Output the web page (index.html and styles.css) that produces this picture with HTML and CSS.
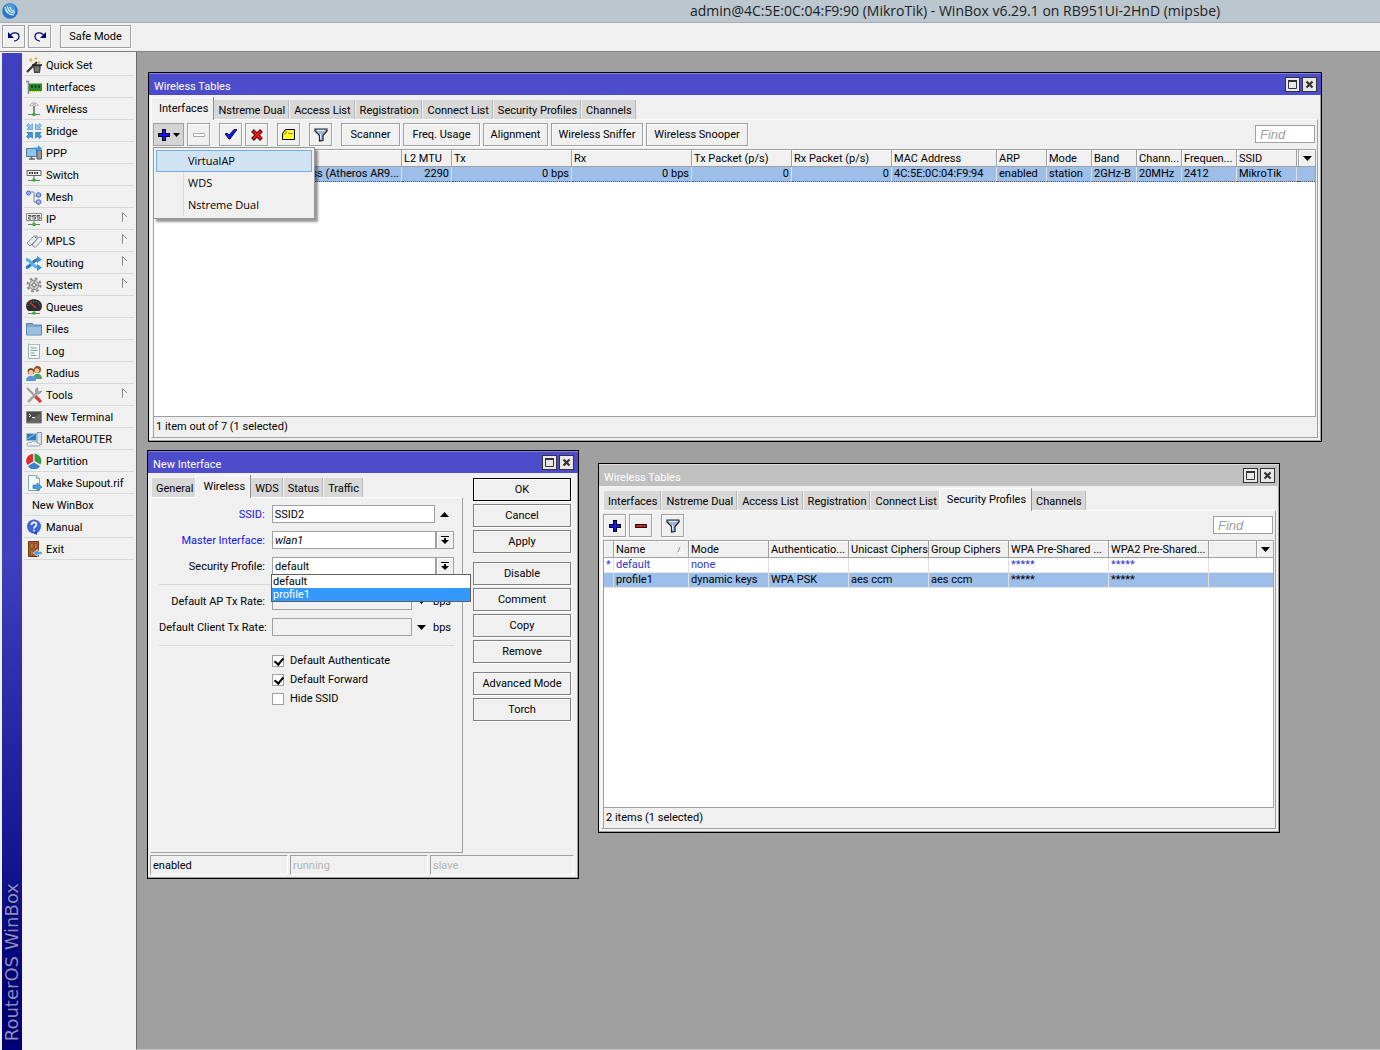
FILE: index.html
```html
<!DOCTYPE html>
<html lang="en">
<head>
<meta charset="utf-8">
<title>WinBox</title>
<link rel="stylesheet" href="styles.css">
</head>
<body>
<svg class="sprite" aria-hidden="true">
  <symbol id="plus" viewBox="0 0 12 12"><path d="M4 0h4v4h4v4H8v4H4V8H0V4h4z" fill="#000"/><path d="M5 1h2v4h4v2H7v4H5V7H1V5h4z" fill="#1414ff"/></symbol>
  <symbol id="filter" viewBox="0 0 14 14"><path d="M1 1h12v2L9 7.500v5L5.500 13V7.500L1 3z" fill="#9fb4dc" stroke="#222" stroke-width="1.200"/><path d="M3 2.500h8M6.500 6v5" stroke="#e4ecfa"/></symbol>
  <symbol id="max" viewBox="0 0 9 9"><path d="M.5.500h8v8h-8z" fill="none" stroke="#333"/><path d="M0 1h9" stroke="#333" stroke-width="2"/></symbol>
  <symbol id="close" viewBox="0 0 9 9"><path d="M1.500 1.500l6 6M7.500 1.500l-6 6" stroke="#333" stroke-width="2.200"/></symbol>
  <symbol id="down" viewBox="0 0 9 5"><path d="M0 0h9L4.500 5z"/></symbol>
  <symbol id="up" viewBox="0 0 9 5"><path d="M0 5h9L4.500 0z"/></symbol>
  <symbol id="pick" viewBox="0 0 8 8"><path d="M0 0h8v1H0zM3 2h2v2h3L4 8 0 4h3z"/></symbol>
  <symbol id="sub" viewBox="0 0 6 10"><path d="M.5 10V.500L5 5" fill="none" stroke="#888"/><path d="M5.500 5L1 9.500" stroke="#fff"/></symbol>
</svg>

<header class="titlebar">
  <svg class="logo" viewBox="0 0 16 16"><circle cx="8" cy="8" r="7.800" fill="#2a78c4"/><circle cx="8" cy="6" r="5.500" fill="#4b9ade"/><path d="M3 4c1 5 4 8 9 8M5.500 3.500c.5 4 3 6.500 7.500 6.500M8 4c.5 2.500 2 4 5 4.500" fill="none" stroke="#fff" stroke-width="1.100"/></svg>
  <h1>admin@4C:5E:0C:04:F9:90 (MikroTik) - WinBox v6.29.1 on RB951Ui-2HnD (mipsbe)</h1>
</header>

<div class="appbar">
  <button class="btn icon" aria-label="Undo"><svg width="12" height="11" viewBox="0 0 12 11"><path d="M2.500 4C5 .5 11 1.500 11 5.500c0 3-3 4.500-5 4.500" fill="none" stroke="#00007a" stroke-width="1.200"/><path d="M0 1v6h6z" fill="#00007a"/></svg></button>
  <button class="btn icon" aria-label="Redo"><svg width="12" height="11" viewBox="0 0 12 11"><path d="M9.500 4C7 .5 1 1.500 1 5.500c0 3 3 4.500 5 4.500" fill="none" stroke="#00007a" stroke-width="1.200"/><path d="M12 1v6H6z" fill="#00007a"/></svg></button>
  <button class="btn safe">Safe Mode</button>
</div>

<div class="main">
  <div class="strip"><span>RouterOS WinBox</span></div>
  <nav class="side">
    <button><svg viewBox="0 0 16 16"><path d="M1 15L11 5" stroke="#333" stroke-width="2.200"/><path d="M7 8h8l-1 8H8z" fill="#444"/><path d="M6 8h10" stroke="#222" stroke-width="1.500"/><path d="M10 9.500v5M12 9.500v5" stroke="#aaa"/><path d="M5 1v4M3 3h4M10 0v3M8.500 1.500h3M13 4v3M11.500 5.500h3" stroke="#d9b02c"/></svg>Quick Set</button>
    <button><svg viewBox="0 0 16 16"><path d="M0 2.500h2.500V15" fill="none" stroke="#888" stroke-width="1.500"/><path d="M3 4h13v8H3z" fill="#2f8a2f"/><path d="M5 6h2v3H5zM8.500 6h2v3h-2zM12 6h2v3h-2z" fill="#165016"/><path d="M4 12.500h11" stroke="#cdbb3a" stroke-dasharray="1 1"/><path d="M3 4.500h13" stroke="#7cc57c"/></svg>Interfaces</button>
    <button><svg viewBox="0 0 16 16"><path d="M4 5c0-4 8-4 8 0M5.800 5.500c0-2.300 4.400-2.300 4.400 0" fill="none" stroke="#999"/><path d="M8 5v8" stroke="#666" stroke-width="1.500"/><path d="M2 13.500h12" stroke="#777"/><circle cx="8" cy="13.500" r="1.800" fill="#2cb52c"/></svg>Wireless</button>
    <button><svg viewBox="0 0 16 16"><g fill="#8cc4f0" stroke="#4a92cc" stroke-width=".6"><path id="arr" d="M.5 2.500l2-2L4.500 2.500 6.500.800v5.700H.800L2.500 4.500z"/><path d="M15.500 2.500l-2-2-2 2L9.500.800v5.700h5.700l-1.700-2z"/></g><g fill="#3c98d8" stroke="#1c68a4" stroke-width=".6"><path d="M.5 13.500l2 2 2-2 2 1.700V9.500H.800l1.700 2z"/><path d="M15.500 13.500l-2 2-2-2-2 1.700V9.500h5.700l-1.700 2z"/></g></svg>Bridge</button>
    <button><svg viewBox="0 0 16 16"><path d="M11 5h4.500v9H11z" fill="#999" stroke="#555"/><path d="M.5 3.500h10v8H.500z" fill="#8ec5ee" stroke="#58748c"/><path d="M3 14h6M5.500 12v2" stroke="#666" stroke-width="1.500"/><path d="M7 4.500h5V7l4-3.500L12 0v2.500H7z" fill="#3d9ae0"/></svg>PPP</button>
    <button><svg viewBox="0 0 16 16"><path d="M1 3.500h14v5H1z" fill="#eee" stroke="#666"/><path d="M3 6h10" stroke="#333" stroke-width="2" stroke-dasharray="1.500 1"/><path d="M8 9v4M2 13.500h12" stroke="#777"/><circle cx="8" cy="13" r="1.800" fill="#2cb52c"/></svg>Switch</button>
    <button><svg viewBox="0 0 16 16"><path d="M4 3h4v10h3M8 7h4" fill="none" stroke="#888"/><g fill="#9cb8f4" stroke="#4466c8"><circle cx="2.500" cy="4" r="2"/><circle cx="12.500" cy="6" r="2.300"/><circle cx="12.500" cy="13" r="2.300"/></g></svg>Mesh</button>
    <button><svg viewBox="0 0 16 16"><path d="M.5 2.500h15v7H.500z" fill="#f4f4f4" stroke="#888"/><path d="M2 4.500h3v1.500H2.500V8H5M6.500 4.500H10M6.500 4.500V6H9.500v2h-3M14 4.500h-3V6h3v2h-3" fill="none" stroke="#555"/><path d="M8 10v4M2 13.500h12" stroke="#777"/><circle cx="8" cy="13.500" r="1.800" fill="#2cb52c"/></svg>IP<svg class="more"><use href="#sub"/></svg></button>
    <button><svg viewBox="0 0 16 16"><path d="M1 10L8 3l3 0 0 3-7 7zM6 12l7-8 2.500.500V8L9 14.500z" fill="#e9eef0" stroke="#7e9096"/><circle cx="9.500" cy="4.500" r=".7" fill="#667"/></svg>MPLS<svg class="more"><use href="#sub"/></svg></button>
    <button><svg viewBox="0 0 16 16"><path d="M0 12.500c5 0 6-8 13-8" fill="none" stroke="#2c78bc" stroke-width="3"/><path d="M0 4.500c5 0 6 8 13 8" fill="none" stroke="#5aaeea" stroke-width="3"/><path d="M11 1l5 3.500L11 8zM11 9l5 3.500-5 3.500z" fill="#3c94d8"/></svg>Routing<svg class="more"><use href="#sub"/></svg></button>
    <button><svg viewBox="0 0 16 16"><circle cx="8" cy="8" r="6.500" fill="none" stroke="#8a8a8a" stroke-width="2" stroke-dasharray="2.600 2.500"/><circle cx="8" cy="8" r="4.800" fill="#d0d0d0" stroke="#8a8a8a"/><circle cx="8" cy="8" r="1.800" fill="#f4f4f4" stroke="#777"/><path d="M8 3.500v2.500M8 10v2.500M3.500 8H6M10 8h2.500" stroke="#888"/></svg>System<svg class="more"><use href="#sub"/></svg></button>
    <button><svg viewBox="0 0 16 16"><path d="M0 7c0-9 16-9 16 0 0 3-2 5-3 5H3C2 12 0 10 0 7z" fill="#2e2e2e"/><path d="M2 7c0-6 12-6 12 0" fill="none" stroke="#888" stroke-dasharray="1 1.500"/><path d="M4 3.500L10 9" stroke="#e03030" stroke-width="1.300"/><path d="M2 14.500h12" stroke="#777"/><circle cx="8" cy="14" r="1.800" fill="#2cb52c"/></svg>Queues</button>
    <button><svg viewBox="0 0 16 16"><path d="M.5 2.500h6l1 1.500h8v10H.500z" fill="#7da7d0" stroke="#5b86b0"/><path d="M1 6h14v7.500H1z" fill="#9cc0e2"/></svg>Files</button>
    <button><svg viewBox="0 0 16 16"><path d="M2.500 1v14.500h11V1l-1 1-1-1-1 1-1-1-1 1-1-1-1 1-1-1-1 1-1-1z" fill="#eff6f4" stroke="#9ab0aa"/><path d="M4.500 5h6M4.500 7.500h7M4.500 10h4M4.500 12.500h6" stroke="#7fa39a"/></svg>Log</button>
    <button><svg viewBox="0 0 16 16"><path d="M7 14c0-7 9-7 9 0z" fill="#4fa070"/><circle cx="11.500" cy="4.500" r="3.500" fill="#a04a20"/><circle cx="11" cy="5.500" r="2.300" fill="#f0c49a"/><path d="M0 16c0-7 10-7 10 0z" fill="#5b94d8"/><circle cx="5" cy="6.500" r="3.300" fill="#70401c"/><circle cx="5" cy="7.500" r="2.500" fill="#f4cca4"/></svg>Radius</button>
    <button><svg viewBox="0 0 16 16"><path d="M1 1l8 8" stroke="#999" stroke-width="1.800"/><path d="M9 9l6 6" stroke="#d83a30" stroke-width="3.200"/><path d="M2 15L11 6" stroke="#a8a8a8" stroke-width="2.600"/><path d="M12 1c-2 0-3 2-2.500 4S14 8 15.500 4L13 5l-1.500-1.500z" fill="#a8a8a8" stroke="#777" stroke-width=".6"/></svg>Tools<svg class="more"><use href="#sub"/></svg></button>
    <button><svg viewBox="0 0 16 16"><path d="M.5 2.500h15v11.500H.500z" fill="#4a4a4a" stroke="#8a8a8a"/><path d="M1.500 13L14.500 4v9z" fill="#666"/><path d="M3 5l2 1.500L3 8M6 8.500h3" fill="none" stroke="#eee"/></svg>New Terminal</button>
    <button><svg viewBox="0 0 16 16"><path d="M11 1.500h4.500v12H11z" fill="#dde3e8" stroke="#8a98a4"/><path d="M.5 2.500h10v7H.500z" fill="#2d7fc4" stroke="#a9bccb"/><path d="M1 8l8-5" stroke="#8cc3ee"/><path d="M1 14c0-3 3-3 4-2 1-3 6-2 6 0 3-.5 4 3 2 3H3c-1 0-2 0-2-1z" fill="#e8f0f6" stroke="#90a4b4"/></svg>MetaROUTER</button>
    <button><svg viewBox="0 0 16 16"><path d="M7 8.500V1a7 7 0 0 0-5.500 11z" fill="#dc2c2c"/><path d="M8.500 8V.500a7.500 7.500 0 0 1 6 11z" fill="#2f9a4a"/><path d="M8 9.500l6 3.500a7 7 0 0 1-12 0z" fill="#3a7fd0"/></svg>Partition</button>
    <button><svg viewBox="0 0 16 16"><path d="M2.500.500h8l3 3v12h-11z" fill="#f5fafa" stroke="#8aa4a8"/><path d="M10.500.500v3h3" fill="none" stroke="#8aa4a8"/><path d="M7 10h4V8l5 4-5 4v-2.500H7z" fill="#45a0e0" stroke="#1f6cac" stroke-width=".6"/></svg>Make Supout.rif</button>
    <button class="bare">New WinBox</button>
    <button><svg viewBox="0 0 16 16"><circle cx="8" cy="7.500" r="7" fill="#3c66d8"/><path d="M5 13l6 3v-4z" fill="#2a4cb0"/><path d="M5.500 6c0-3.500 5-3.500 5-.5 0 2-2.500 1.700-2.500 4M8 10.800v1.700" fill="none" stroke="#fff" stroke-width="1.700"/></svg>Manual</button>
    <button><svg viewBox="0 0 16 16"><path d="M2.500.500h10v15h-10z" fill="#a8602c" stroke="#6e3a14"/><path d="M4.500 2.500h2.500v5H4.500zM8.500 2.500H11v5H8.500zM4.500 9h2.500v5H4.500z" fill="#c47c40" stroke="#80481c" stroke-width=".7"/><path d="M16 10.500h-4V8.500L7 12l5 3.500v-2h4z" fill="#4aa6e4" stroke="#e8f4fc" stroke-width=".6"/></svg>Exit</button>
  </nav>

  <main class="desktop">
    <section class="win win-tables">
      <header class="cap"><h2>Wireless Tables</h2><button aria-label="Maximize"><svg><use href="#max"/></svg></button><button aria-label="Close"><svg><use href="#close"/></svg></button></header>
      <div class="tabs" role="tablist">
        <button role="tab" aria-selected="true">Interfaces</button><button role="tab">Nstreme Dual</button><button role="tab">Access List</button><button role="tab">Registration</button><button role="tab">Connect List</button><button role="tab">Security Profiles</button><button role="tab">Channels</button>
      </div>
      <div class="panel">
        <div class="tools">
          <div class="split">
            <button class="btn pressed" aria-label="Add"><svg width="12" height="12"><use href="#plus"/></svg><svg width="7" height="4"><use href="#down"/></svg></button>
            <div class="menu" role="menu">
              <button role="menuitem" class="hot">VirtualAP</button>
              <button role="menuitem">WDS</button>
              <button role="menuitem">Nstreme Dual</button>
            </div>
          </div>
          <button class="btn icon" aria-label="Remove" disabled><svg width="12" height="4" viewBox="0 0 12 4"><path d="M.5.500h11v3H.500z" fill="#fff" stroke="#aaa"/></svg></button>
          <button class="btn icon gap" aria-label="Enable"><svg width="12" height="11" viewBox="0 0 12 11"><path d="M0 5l2-1 2 2 5-5.500h3L5 10H4z" fill="#1414ff" stroke="#000" stroke-width=".8"/></svg></button>
          <button class="btn icon" aria-label="Disable"><svg width="12" height="12" viewBox="0 0 12 12"><path d="M1.500 1.500l9 9M10.500 1.500l-9 9" stroke="#300" stroke-width="4"/><path d="M2 2l8 8M10 2l-8 8" stroke="#f01414" stroke-width="2.400"/></svg></button>
          <button class="btn icon gap" aria-label="Comment"><svg width="13" height="11" viewBox="0 0 13 11"><path d="M3.500.500h9v10H.500v-6z" fill="#ffff28" stroke="#000"/><path d="M4 1v4H1M6 4.500h5" fill="none" stroke="#a09020"/></svg></button>
          <button class="btn icon gap" aria-label="Filter"><svg width="14" height="14"><use href="#filter"/></svg></button>
          <button class="btn gap w-scan">Scanner</button>
          <button class="btn w-freq">Freq. Usage</button>
          <button class="btn w-align">Alignment</button>
          <button class="btn w-sniff">Wireless Sniffer</button>
          <button class="btn w-snoop">Wireless Snooper</button>
          <input class="find" type="text" placeholder="Find" aria-label="Find">
        </div>
        <div class="list">
          <table>
            <colgroup><col class="c125"><col class="c123"><col class="c50"><col class="c120"><col class="c120"><col class="c100"><col class="c100"><col class="c105"><col class="c50"><col class="c45"><col class="c45"><col class="c45"><col class="c55"><col class="c60"><col><col class="c16"></colgroup>
            <thead><tr><th></th><th></th><th>L2 MTU</th><th>Tx</th><th>Rx</th><th>Tx Packet (p/s)</th><th>Rx Packet (p/s)</th><th>MAC Address</th><th>ARP</th><th>Mode</th><th>Band</th><th>Chann...</th><th>Frequen...</th><th>SSID</th><th></th><th class="drop"><svg width="9" height="5"><use href="#down"/></svg></th></tr></thead>
            <tbody><tr class="sel focus"><td></td><td class="num">Wireless (Atheros AR9...</td><td class="num">2290</td><td class="num">0 bps</td><td class="num">0 bps</td><td class="num">0</td><td class="num">0</td><td>4C:5E:0C:04:F9:94</td><td>enabled</td><td>station</td><td>2GHz-B</td><td>20MHz</td><td>2412</td><td>MikroTik</td><td></td><td></td></tr></tbody>
          </table>
        </div>
        <div class="status">1 item out of 7 (1 selected)</div>
      </div>
    </section>

    <section class="win win-iface">
      <header class="cap"><h2>New Interface</h2><button aria-label="Maximize"><svg><use href="#max"/></svg></button><button aria-label="Close"><svg><use href="#close"/></svg></button></header>
      <div class="cols">
        <div class="left">
          <div class="tabs" role="tablist">
            <button role="tab">General</button><button role="tab" aria-selected="true">Wireless</button><button role="tab">WDS</button><button role="tab">Status</button><button role="tab">Traffic</button>
          </div>
          <form class="panel form">
            <div class="row"><label class="blue" for="ssid">SSID:</label><input id="ssid" class="wide" type="text" value="SSID2"><button type="button" class="arrow" aria-label="Clear"><svg width="9" height="5"><use href="#up"/></svg></button></div>
            <div class="row"><label class="blue" for="master">Master Interface:</label><select id="master" class="wide ital"><option>wlan1</option></select><button type="button" class="pick" aria-label="Choose"><svg width="8" height="8"><use href="#pick"/></svg></button></div>
            <div class="row combo"><label for="sec">Security Profile:</label><select id="sec" class="wide"><option>default</option><option>profile1</option></select><button type="button" class="pick" aria-label="Choose"><svg width="8" height="8"><use href="#pick"/></svg></button>
              <ul class="options" role="listbox" aria-label="Security Profile"><li role="option">default</li><li role="option" aria-selected="true">profile1</li></ul></div>
            <hr>
            <div class="row"><label for="aprate">Default AP Tx Rate:</label><input id="aprate" class="short" type="text"><button type="button" class="arrow" aria-label="Expand"><svg width="9" height="5"><use href="#down"/></svg></button><span class="unit">bps</span></div>
            <div class="row"><label for="clrate">Default Client Tx Rate:</label><input id="clrate" class="short" type="text"><button type="button" class="arrow" aria-label="Expand"><svg width="9" height="5"><use href="#down"/></svg></button><span class="unit">bps</span></div>
            <hr>
            <div class="checks">
              <label><input type="checkbox" checked>Default Authenticate</label>
              <label><input type="checkbox" checked>Default Forward</label>
              <label><input type="checkbox">Hide SSID</label>
            </div>
          </form>
        </div>
        <div class="actions">
          <button class="btn ok">OK</button><button class="btn">Cancel</button><button class="btn">Apply</button>
          <button class="btn first">Disable</button><button class="btn">Comment</button><button class="btn">Copy</button><button class="btn">Remove</button>
          <button class="btn first">Advanced Mode</button><button class="btn">Torch</button>
        </div>
      </div>
      <footer class="states"><span>enabled</span><span class="off">running</span><span class="off">slave</span></footer>
    </section>

    <section class="win win-sec">
      <header class="cap idle"><h2>Wireless Tables</h2><button aria-label="Maximize"><svg><use href="#max"/></svg></button><button aria-label="Close"><svg><use href="#close"/></svg></button></header>
      <div class="tabs" role="tablist">
        <button role="tab">Interfaces</button><button role="tab">Nstreme Dual</button><button role="tab">Access List</button><button role="tab">Registration</button><button role="tab">Connect List</button><button role="tab" aria-selected="true">Security Profiles</button><button role="tab">Channels</button>
      </div>
      <div class="panel">
        <div class="tools">
          <button class="btn icon" aria-label="Add"><svg width="12" height="12"><use href="#plus"/></svg></button>
          <button class="btn icon" aria-label="Remove"><svg width="12" height="4" viewBox="0 0 12 4"><path d="M.5.500h11v3H.500z" fill="#f01414" stroke="#000"/></svg></button>
          <button class="btn icon gap" aria-label="Filter"><svg width="14" height="14"><use href="#filter"/></svg></button>
          <input class="find" type="text" placeholder="Find" aria-label="Find">
        </div>
        <div class="list">
          <table>
            <colgroup><col class="c10"><col class="c75"><col class="c80"><col class="c80"><col class="c80"><col class="c80"><col class="c100"><col class="c100"><col><col class="c16"></colgroup>
            <thead><tr><th></th><th>Name<svg class="sort" width="7" height="7" viewBox="0 0 7 7"><path d="M.5 6.500L3.500.500" stroke="#888"/><path d="M3.500.500L6.500 6.500H.500" fill="none" stroke="#fff"/></svg></th><th>Mode</th><th>Authenticatio...</th><th>Unicast Ciphers</th><th>Group Ciphers</th><th>WPA Pre-Shared ...</th><th>WPA2 Pre-Shared...</th><th></th><th class="drop"><svg width="9" height="5"><use href="#down"/></svg></th></tr></thead>
            <tbody>
              <tr class="builtin"><td>*</td><td>default</td><td>none</td><td></td><td></td><td></td><td>*****</td><td>*****</td><td></td><td></td></tr>
              <tr class="sel"><td></td><td>profile1</td><td>dynamic keys</td><td>WPA PSK</td><td>aes ccm</td><td>aes ccm</td><td>*****</td><td>*****</td><td></td><td></td></tr>
            </tbody>
          </table>
        </div>
        <div class="status">2 items (1 selected)</div>
      </div>
    </section>
  </main>
</div>
</body>
</html>
```
FILE: styles.css
```css
:root {
  --face: #f0f0f0;
  --line: #a0a0a0;
  --blue: #4d4dcc;
  --ui: Roboto, "Liberation Sans", sans-serif;
}
* { box-sizing: border-box; }
body {
  margin: 0;
  min-height: 100vh;
  display: flex;
  flex-direction: column;
  background: var(--face);
  color: #000;
  font: 11px/15px var(--ui);
  overflow: hidden;
}
button, input, select { font: inherit; color: inherit; margin: 0; border-radius: 0; }
button { padding: 0; border: 0; background: none; white-space: nowrap; }
h1, h2, ul { margin: 0; padding: 0; font: inherit; }
.sprite { display: none; }

/* application frame */
.titlebar {
  display: flex;
  align-items: center;
  height: 23px;
  background: #bbc6ce;
  border-bottom: 1px solid #a4adb5;
}
.logo { width: 16px; height: 16px; margin-left: 2px; }
h1 {
  position: absolute;
  left: 50%;
  font: 14px/22px "Open Sans", sans-serif;
  white-space: nowrap;
  color: #222;
}
.appbar { display: flex; gap: 3px; height: 29px; padding: 2px; border-bottom: 1px solid #808080; }
.safe { width: 71px; margin-left: 6px; }
.main { flex: 1; display: flex; }

.strip {
  width: 20px;
  margin: 1px 0 0 2px;
  display: flex;
  align-items: flex-end;
  justify-content: center;
  padding-bottom: 9px;
  background: linear-gradient(#4040c0 50%, #000078 96%);
}
.strip span {
  writing-mode: vertical-rl;
  transform: rotate(180deg);
  font: 18px/20px "DejaVu Sans", sans-serif;
  color: #8c8cc4;
  text-shadow: -1px -1px 2px #000040;
  white-space: nowrap;
}
.side { width: 114px; padding: 2px 2px 0; display: flex; flex-direction: column; }
.side button {
  display: flex;
  align-items: center;
  gap: 4px;
  height: 22px;
  padding: 1px 6px 0 2px;
  border-bottom: 1px solid #d8d8d8;
}
.side svg { width: 16px; height: 16px; flex: none; }
.side .bare { padding-left: 8px; }
.side .more { width: 6px; height: 10px; margin: 0 0 4px auto; }

.desktop {
  flex: 1;
  position: relative;
  background: var(--line);
  border-left: 1px solid #686868;
  border-bottom: 1px solid #c8c8c8;
}

/* shared controls */
.btn {
  height: 23px;
  border: 1px solid var(--line);
  box-shadow: inset 1px 1px #fafafa, 1px 1px #fff;
  background: var(--face);
  text-align: center;
}
.btn.icon { width: 23px; display: flex; align-items: center; justify-content: center; }

/* child windows */
.win {
  position: absolute;
  display: flex;
  flex-direction: column;
  border: 1px solid #000;
  background: var(--face);
  box-shadow: inset -1px -1px var(--line);
}
.win-tables { left: 11px; top: 20px; width: 1174px; height: 370px; }
.win-iface { left: 10px; top: 398px; width: 432px; height: 429px; }
.win-sec { left: 461px; top: 411px; width: 682px; height: 370px; }
.cap {
  display: flex;
  align-items: center;
  gap: 2px;
  height: 22px;
  padding: 0 4px 0 5px;
  background: var(--blue);
  border-top: 1px solid #8484dc;
  color: #fff;
}
.cap.idle { background: #c0c0c0; border-color: #dcdcdc; }
.cap h2 { flex: 1; padding-top: 3px; }
.cap button {
  width: 15px;
  height: 15px;
  display: grid;
  place-items: center;
  background: #e8e8e8;
  border: 1px solid #333;
}
.cap svg { width: 9px; height: 9px; }

.tabs { display: flex; align-items: flex-end; gap: 2px; height: 24px; padding-left: 5px; }
.tabs button {
  height: 19px;
  padding: 1px 3px 0 4px;
  background: #d8d8d8;
  box-shadow: 1px 0 #b8b8b8;
}
.tabs [aria-selected] {
  position: relative;
  z-index: 1;
  height: 23px;
  padding: 0 5px 1px 7px;
  margin: 0 -1px -1px -3px;
  background: var(--face);
  border-left: 1px solid #fff;
  border-top: 1px solid #fff;
  box-shadow: 1px 0 #909090;
}
.panel {
  flex: 1;
  display: flex;
  flex-direction: column;
  margin: 0 3px 3px 2px;
  border: 1px solid #fff;
  border-right-color: var(--line);
  border-bottom-color: var(--line);
  padding: 0 1px;
}
.tools { display: flex; gap: 3px; padding: 3px 1px 3px 0; }
.gap { margin-left: 6px; }
.pressed {
  width: 31px;
  display: flex;
  align-items: center;
  justify-content: center;
  gap: 3px;
  background: #d4d4d4;
  box-shadow: none;
}
.w-scan { width: 59px; }
.w-freq { width: 77px; }
.w-align { width: 65px; }
.w-sniff { width: 92px; }
.w-snoop { width: 102px; }
.find {
  width: 60px;
  height: 18px;
  margin: 2px 0 0 auto;
  padding: 0 4px;
  border: 1px solid var(--line);
  background: #fff;
  font: italic 13px/15px "Liberation Sans", sans-serif;
}
.find::placeholder { color: #a0a0a0; }

.split { position: relative; }
.menu {
  position: absolute;
  z-index: 2;
  left: 0;
  top: 24px;
  width: 162px;
  padding: 2px;
  display: flex;
  flex-direction: column;
  background: linear-gradient(#dcdcdc, #dcdcdc) 29px 2px / 1px calc(100% - 4px) no-repeat var(--face);
  border: 1px solid #979797;
  box-shadow: 3px 3px 2px rgba(0, 0, 0, .4);
  font: 11px/20px "Open Sans", sans-serif;
}
.menu button { height: 22px; padding-left: 31px; text-align: left; border: 1px solid transparent; }
.menu .hot { background: #d1e2f2; border-color: #78aee5; }

/* lists */
.list { flex: 1; background: #fff; border: 1px solid var(--line); }
table { width: 100%; table-layout: fixed; border-collapse: separate; border-spacing: 0; }
th, td { padding: 0 2px; text-align: left; font-weight: normal; white-space: nowrap; overflow: hidden; }
th {
  height: 17px;
  background: var(--face);
  border-right: 1px solid var(--line);
  border-bottom: 1px solid var(--line);
  box-shadow: inset 1px 1px #fff;
}
td { height: 15px; line-height: 14px; border-right: 1px solid #e0e0e0; border-bottom: 1px solid #e8e8e8; }
th:last-child, td:last-child, td:nth-last-child(2) { border-right: 0; }
th:nth-last-child(2) { padding: 0; }
.drop { text-align: center; }
.drop svg { vertical-align: middle; }
.num { text-align: right; }
.sel td { background: #9cbee8; }
.focus td { border-bottom: 1px dotted #555; }
.builtin { color: #3333cc; }
.sort { float: right; margin: 4px 2px 0 0; }
.c10 { width: 10px; }
.c16 { width: 16px; }
.c45 { width: 45px; }
.c50 { width: 50px; }
.c55 { width: 55px; }
.c60 { width: 60px; }
.c75 { width: 75px; }
.c80 { width: 80px; }
.c100 { width: 100px; }
.c105 { width: 105px; }
.c120 { width: 120px; }
.c123 { width: 123px; }
.c125 { width: 125px; }
.status { height: 20px; padding: 2px; border-left: 1px solid var(--line); }

/* interface dialog */
.cols { flex: 1; display: flex; }
.left { width: 316px; display: flex; flex-direction: column; }
.left .panel { margin: 0 1px 2px 2px; padding: 7px 8px; }
.left .tabs { padding-left: 4px; }
.row { display: flex; height: 18px; margin-bottom: 8px; align-items: center; }
.row label { width: 106px; margin-right: 7px; text-align: right; white-space: nowrap; }
.blue { color: #1414f0; }
.row input, .row select {
  appearance: none;
  height: 18px;
  padding: 0 2px;
  border: 1px solid var(--line);
  background: #fff;
}
.row .wide { width: 164px; }
.row .short { width: 140px; background: var(--face); }
.row .ital { font-style: italic; }
.arrow { width: 19px; display: grid; place-items: center; }
.pick {
  width: 18px;
  height: 18px;
  display: grid;
  place-items: center;
  border: 1px solid var(--line);
  box-shadow: inset 1px 1px #fff;
}
.unit { margin-left: 2px; }
.combo { position: relative; }
.options {
  position: absolute;
  z-index: 1;
  left: 112px;
  top: 17px;
  width: 200px;
  background: #fff;
  border: 1px solid #606060;
  list-style: none;
  line-height: 13px;
}
.options li { padding-left: 1px; }
.options [aria-selected] { background: #3399ff; color: #fff; }
hr { width: 100%; height: 1px; margin: 1px 0 7px; border: 0; background: #d8d8d8; }
.checks { display: flex; flex-direction: column; gap: 4px; padding-left: 113px; }
.checks label { display: flex; align-items: center; gap: 6px; }
.checks input {
  appearance: none;
  width: 12px;
  height: 12px;
  margin: 0;
  border: 1px solid var(--line);
  background: #fff;
}
.checks input:checked::before {
  content: "";
  display: block;
  width: 4px;
  height: 7px;
  margin: 0 0 0 3px;
  border: solid #000;
  border-width: 0 2px 2px 0;
  transform: rotate(40deg);
}
.actions { width: 98px; margin-left: 9px; padding-top: 5px; display: flex; flex-direction: column; gap: 3px; }
.actions .btn { border-color: #808080; }
.actions .ok { border-color: #000; }
.actions .first { margin-top: 6px; }
.states { display: flex; gap: 2px; padding: 0 4px 3px 2px; }
.states span {
  flex: 0 0 138px;
  height: 20px;
  padding: 2px;
  border: 1px solid #fff;
  border-top-color: var(--line);
  border-left-color: var(--line);
}
.states span:last-child { flex: 1; }
.states .off { color: #b4b4b4; }
```
